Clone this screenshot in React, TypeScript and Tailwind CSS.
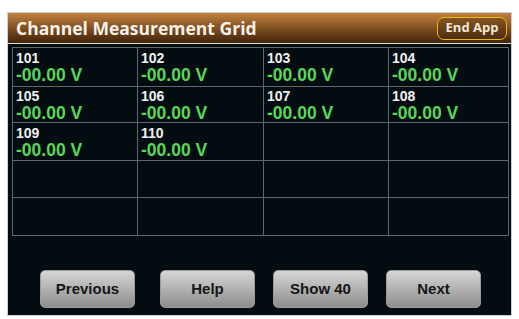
const channels = ["101", "102", "103", "104", "105", "106", "107", "108", "109", "110"];

function Cell({ ch }: { ch?: string }) {
  return (
    <div className="flex flex-col justify-center border-r border-b border-[#5f6868] pl-[3px]">
      {ch && (
        <>
          <span className="text-[14px] leading-[16px] font-bold text-[#f2f2f2]">{ch}</span>
          <span className="text-[17.5px] leading-[18px] font-bold text-[#58d858]">-00.00 V</span>
        </>
      )}
    </div>
  );
}

function NavButton({ label, className }: { label: string; className: string }) {
  return (
    <button
      className={`h-[38px] w-[95px] rounded-[5px] border border-[#9a9a9a] bg-gradient-to-b from-[#d6d6d6] to-[#8e8e8e] text-[15px] font-bold text-[#161616] ${className}`}
    >
      {label}
    </button>
  );
}

export default function App() {
  const cells = Array.from({ length: 20 }, (_, i) => channels[i]);

  return (
    <div
      className="h-[319px] w-[519px] bg-white pt-[13px] pl-[8px]"
      style={{ fontFamily: '"Liberation Sans", Arial, sans-serif' }}
    >
      <div className="flex h-[302px] w-[503px] flex-col bg-[#030d11] outline outline-1 outline-[#cfcfcf]">
        {/* header bar */}
        <div className="flex h-[31px] items-center justify-between border-b border-[#e6ddd2] bg-gradient-to-b from-[#c4813f] to-[#43240a] pr-[4px] pl-[8px]">
          <span
            className="text-[17.5px] font-bold text-[#f7f1ea]"
            style={{ fontFamily: '"Open Sans", sans-serif' }}
          >
            Channel Measurement Grid
          </span>
          <button
            className="h-[23px] w-[70px] rounded-[7px] border-[1.5px] border-[#e4c000] bg-[#4a2a0c]/40 text-[13px] font-bold text-[#f3e9d6]"
            style={{ fontFamily: '"Open Sans", sans-serif' }}
          >
            End App
          </button>
        </div>

        {/* channel grid */}
        <div className="mt-[3px] ml-[4px] grid w-[497px] grid-cols-[125px_126px_125px_120px] grid-rows-[39px_36px_38px_37px_38px] border-t border-l border-[#5f6868]">
          {cells.map((ch, i) => (
            <Cell key={i} ch={ch} />
          ))}
        </div>

        {/* bottom buttons */}
        <div className="mt-[34px] flex">
          <NavButton label="Previous" className="ml-[32px]" />
          <NavButton label="Help" className="ml-[25px]" />
          <NavButton label="Show 40" className="ml-[18px]" />
          <NavButton label="Next" className="ml-[18px]" />
        </div>
      </div>
    </div>
  );
}
